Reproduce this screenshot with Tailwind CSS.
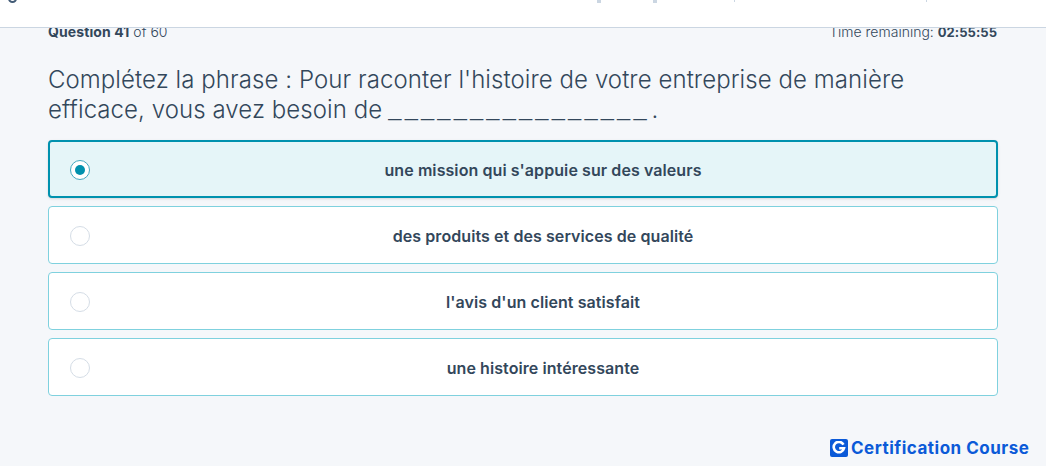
<!DOCTYPE html>
<html lang="fr"><head><meta charset="utf-8"><script src="https://cdn.jsdelivr.net/npm/@tailwindcss/browser@4"></script></head>
<body class="w-[1046px] h-[466px] overflow-hidden bg-[#f5f7fa] font-['Inter',sans-serif] text-[#33475b]">
<header class="relative h-[28px] bg-white border-b border-[#cbd6e2]">
  <span class="absolute left-[8px] top-[-6px] w-[9px] h-[9px] rounded-full border-2 border-[#425b76]"></span>
  <span class="absolute left-[597px] top-0 w-[4px] h-[3px] bg-[#cbd6e2]"></span>
  <span class="absolute left-[653px] top-0 w-[4px] h-[3px] bg-[#cbd6e2]"></span>
  <span class="absolute left-[734px] top-0 w-px h-[2px] bg-[#cbd6e2]"></span>
  <span class="absolute left-[926px] top-0 w-px h-[2px] bg-[#cbd6e2]"></span>
</header>
<main class="px-[48px] w-[1046px]">
  <div class="flex justify-between items-baseline -mt-[5px] h-[18px] text-[14px] leading-[18px] font-light -z-10 relative">
    <p><b class="font-bold tracking-[0.1px]">Question 41</b> of 60</p>
    <p class="pr-px">Time remaining: <b class="font-bold text-[13px] tracking-[0.05px]">02:55:55</b></p>
  </div>
  <h1 class="mt-[24px] w-[950px] text-[24px] leading-[30px] font-light tracking-[0.07px]">Complétez la phrase : Pour raconter l'histoire de votre entreprise de manière efficace, vous avez besoin de <span class="relative top-[1px] text-[31px] leading-[0] font-extralight tracking-[2.7px] -ml-[1px] mr-[2px]">________________</span>.</h1>
  <div class="mt-[15px] flex flex-col gap-[8px] text-[16px] font-semibold tracking-[0.08px]">
    <label class="relative h-[58px] pl-[40px] pt-[1px] flex items-center justify-center rounded border-2 border-[#0091ae] bg-[#e5f5f8] shadow-sm">
      <span class="absolute left-[20px] top-[18px] w-[20px] h-[20px] rounded-full border-[1.5px] border-[#45a9c0] bg-white flex items-center justify-center"><span class="w-[10px] h-[10px] rounded-full bg-[#0091ae]"></span></span>
      une mission qui s'appuie sur des valeurs
    </label>
    <label class="relative h-[58px] pl-[40px] pt-[1px] flex items-center justify-center rounded border border-[#7fd1de] bg-white">
      <span class="absolute left-[21px] top-[19px] w-[20px] h-[20px] rounded-full border-[1.5px] border-[#d5dde6] bg-white"></span>
      des produits et des services de qualité
    </label>
    <label class="relative h-[58px] pl-[40px] pt-[1px] flex items-center justify-center rounded border border-[#7fd1de] bg-white">
      <span class="absolute left-[21px] top-[19px] w-[20px] h-[20px] rounded-full border-[1.5px] border-[#d5dde6] bg-white"></span>
      l'avis d'un client satisfait
    </label>
    <label class="relative h-[58px] pl-[40px] pt-[1px] flex items-center justify-center rounded border border-[#7fd1de] bg-white">
      <span class="absolute left-[21px] top-[19px] w-[20px] h-[20px] rounded-full border-[1.5px] border-[#d5dde6] bg-white"></span>
      une histoire intéressante
    </label>
  </div>
</main>
<footer class="absolute left-[830px] top-[438px] flex items-center gap-[3px] text-[#0b5ad8]">
  <span class="w-[18px] h-[18px] rounded-[2px] bg-[#0b5ad8] text-white flex items-center justify-center">
    <svg width="14" height="14" viewBox="0 0 14 14" fill="none" stroke="#fff" stroke-width="2.6"><path d="M11.5 3.6A5.2 5.2 0 1 0 12 7.2H7.2"/></svg>
  </span>
  <span class="text-[17px] leading-[20px] font-bold tracking-[0.5px]">Certification Course</span>
</footer>
</body></html>
